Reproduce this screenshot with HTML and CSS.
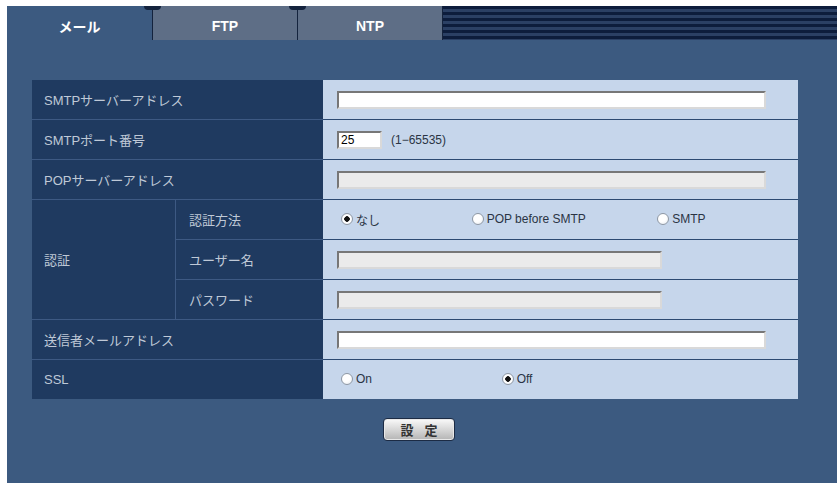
FILE: index.html
```html
<!DOCTYPE html>
<html>
    <head>
        <title>メール設定</title>
        <meta charset=utf8>
        <link rel="stylesheet" href="styles.css">
    </head>
    <body>
        <div id="frame">
            <div class="tabs">
                <div class="tab active">メール</div>
                <div class="tab">FTP</div>
                <div class="tab">NTP</div>
                <div class="tab-rest"></div>
            </div>
            <div class="content">
                <table class="settings">
                    <tr>
                        <th colspan="2">SMTPサーバーアドレス</th>
                        <td><input class="text wide" type="text"></td>
                    </tr>
                    <tr>
                        <th colspan="2">SMTPポート番号</th>
                        <td><input class="text port" type="text" value="25"><span class="hint">(1−65535)</span></td>
                    </tr>
                    <tr>
                        <th colspan="2">POPサーバーアドレス</th>
                        <td><input class="text wide" type="text" disabled></td>
                    </tr>
                    <tr>
                        <th rowspan="3" class="group">認証</th>
                        <th class="sub">認証方法</th>
                        <td>
                            <label class="opt auth-1"><input type="radio" name="auth" checked>なし</label>
                            <label class="opt auth-2"><input type="radio" name="auth">POP before SMTP</label>
                            <label class="opt"><input type="radio" name="auth">SMTP</label>
                        </td>
                    </tr>
                    <tr>
                        <th class="sub">ユーザー名</th>
                        <td><input class="text mid" type="text" disabled></td>
                    </tr>
                    <tr>
                        <th class="sub">パスワード</th>
                        <td><input class="text mid" type="password" disabled></td>
                    </tr>
                    <tr>
                        <th colspan="2">送信者メールアドレス</th>
                        <td><input class="text wide" type="text"></td>
                    </tr>
                    <tr>
                        <th colspan="2">SSL</th>
                        <td>
                            <label class="opt ssl-on"><input type="radio" name="ssl">On</label>
                            <label class="opt"><input type="radio" name="ssl" checked>Off</label>
                        </td>
                    </tr>
                </table>
                <div class="actions">
                    <button class="submit">設 定</button>
                </div>
            </div>
        </div>
    </body>
</html>
```

FILE: styles.css
```css
html {
    font-family: "Liberation Sans", "Noto Sans CJK JP", sans-serif;
}
body {
    margin: 0;
    padding: 0;
    background-color: white;
}
#frame {
    margin: 6px 0 0 7px;
    width: 830px;
    height: 477px;
    background-color: #3c5a80;
}
.tabs {
    display: flex;
    height: 34px;
}
.tab {
    position: relative;
    width: 145px;
    box-sizing: border-box;
    padding-top: 6px;
    display: flex;
    align-items: center;
    justify-content: center;
    background-color: #5e6e86;
    color: white;
    font-weight: bold;
    font-size: 14px;
    border-left: 1px solid #14233d;
}
.tab::before {
    content: "";
    position: absolute;
    top: 0;
    left: -9px;
    width: 17px;
    height: 4px;
    background-color: #14233d;
    border-radius: 0 0 7px 7px;
}
.tab.active {
    background-color: #3c5a80;
    border-left: none;
}
.tab.active::before {
    display: none;
}
.tab-rest {
    flex: 1;
    border-left: 1px solid #14233d;
    background: repeating-linear-gradient(#0d1d3c 0, #0d1d3c 3px, #2b4064 3px, #2b4064 6px);
}
.content {
    padding: 40px 0 0 25px;
}
.settings {
    border-collapse: collapse;
    width: 766px;
    font-size: 13px;
}
.settings tr + tr th,
.settings tr + tr td {
    border-top: 1px solid #2c4a72;
}
.settings tr + tr th {
    border-top-color: #3d5983;
}
.settings th {
    height: 39px;
    padding: 0 0 0 12px;
    text-align: left;
    font-weight: normal;
    color: #bfc9d7;
    background-color: #1f3a60;
}
.settings th.group {
    width: 131px;
    border-right: 1px solid #3d5983;
}
.settings th.sub {
    padding-left: 13px;
}
.settings td {
    width: 461px;
    padding: 0 0 0 14px;
    background-color: #c6d6eb;
    color: #2a3444;
}
.text {
    box-sizing: border-box;
    height: 18px;
    margin: 0;
    padding: 0 2px;
    vertical-align: middle;
    border: 2px solid;
    border-color: #777 #d9d9d9 #d9d9d9 #777;
    background-color: white;
    font: 12px "Liberation Sans", sans-serif;
}
.text:disabled {
    background-color: #ebebeb;
}
.text.wide {
    width: 429px;
}
.text.mid {
    width: 325px;
}
.text.port {
    width: 45px;
}
.hint {
    margin-left: 9px;
    vertical-align: middle;
    font-size: 12px;
}
.opt {
    display: inline-flex;
    align-items: center;
    font-size: 12px;
}
.opt input {
    appearance: none;
    width: 12px;
    height: 12px;
    margin: 0 3px 0 4px;
    border: 1px solid #8d97a4;
    border-radius: 50%;
    background: radial-gradient(circle at 40% 35%, #fff 0, #fff 45%, #e3e8ee 100%);
}
.opt input:checked {
    background: radial-gradient(circle, #111 0, #111 2.5px, #fff 3px, #fff 60%, #e3e8ee 100%);
}
.auth-1 {
    width: 127px;
}
.auth-2 {
    width: 182px;
}
.ssl-on {
    width: 157px;
}
.actions {
    width: 766px;
    padding: 19px 0 0 8px;
    box-sizing: border-box;
    text-align: center;
}
.submit {
    width: 72px;
    height: 23px;
    padding: 0;
    border: 1px solid #1c2b44;
    border-radius: 4px;
    background: linear-gradient(#fafafa, #d4d4d4 55%, #b4b4b4);
    box-shadow: inset 0 0 0 1px #e8e8e8;
    color: #333;
    font: bold 13px "Noto Sans CJK JP", sans-serif;
    letter-spacing: 4px;
    text-indent: 4px;
}
```
